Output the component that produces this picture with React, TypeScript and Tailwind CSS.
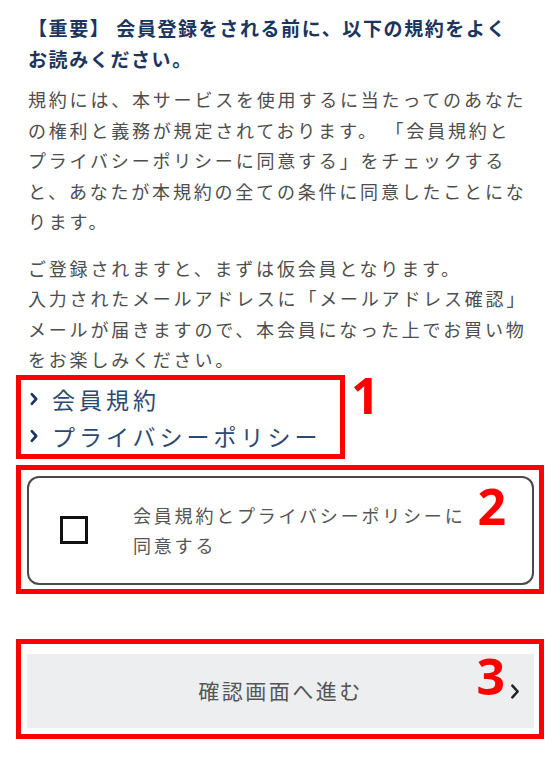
import React from 'react';

function Chevron({ className, width = 2.6 }: { className?: string; width?: number }) {
    return (
        <svg viewBox="0 0 10 16" className={className} fill="none" stroke="currentColor" strokeWidth={width} strokeLinecap="round" strokeLinejoin="round">
            <path d="M2.5 2.5 L7.5 8 L2.5 13.5" />
        </svg>
    );
}

function Mark({ n, className }: { n: string; className?: string }) {
    return (
        <span className={`font-['Open_Sans',sans-serif] text-[50px] font-bold tracking-normal text-[#ff0000] ${className ?? ''}`}>
            {n}
        </span>
    );
}

export default function App() {
    return (
        <div className="min-h-screen bg-white px-4 pt-[12px] font-['Noto_Sans_CJK_JP',sans-serif] [text-spacing-trim:space-all]">
            <div className="w-[524px] px-3">
                <h2 className="w-[488px] text-[19px] font-bold leading-[31px] tracking-[1.6px] text-[#1c355e]">
                    【重要】 会員登録をされる前に、以下の規約をよくお読みください。
                </h2>
                <p className="mt-[10px] text-[18px] leading-[30.5px] tracking-[2.8px] text-[#4d4d4d]">
                    規約には、本サービスを使用するに当たってのあなたの権利と義務が規定されております。 「会員規約とプライバシーポリシーに同意する」をチェックすると、あなたが本規約の全ての条件に同意したことになります。
                </p>
                <p className="mt-[16px] text-[18px] leading-[30.5px] tracking-[2.8px] text-[#4d4d4d]">
                    ご登録されますと、まずは仮会員となります。
                    <br />
                    入力されたメールアドレスに「メールアドレス確認」メールが届きますので、本会員になった上でお買い物をお楽しみください。
                </p>
            </div>

            <div className="flex items-start">
                <div className="w-[329px] border-[5px] border-[#ff0000] pt-[1px] pl-[8px]">
                    <a className="flex items-center text-[23px] leading-[37px] tracking-[4px] text-[#2c4a70]">
                        <Chevron width={3} className="mr-[13px] h-[14px] w-[10px] text-[#1c355e]" />
                        会員規約
                    </a>
                    <a className="flex items-center text-[23px] leading-[36px] tracking-[4px] text-[#2c4a70]">
                        <Chevron width={3} className="mr-[13px] h-[14px] w-[10px] text-[#1c355e]" />
                        プライバシーポリシー
                    </a>
                </div>
                <Mark n="1" className="ml-[6px] leading-[40px]" />
            </div>

            <div className="mt-[6px] border-[5px] border-[#ff0000] p-[6px] pr-[5px] pb-[4px]">
                <label className="relative flex h-[109px] items-center rounded-[12px] border-2 border-[#4a4a4a] bg-white">
                    <span className="ml-[31px] h-[28px] w-[28px] shrink-0 border-[3px] border-[#111]" />
                    <span className="ml-[45px] w-[345px] text-[18px] leading-[30px] tracking-[2.8px] text-[#555]">
                        会員規約とプライバシーポリシーに同意する
                    </span>
                    <Mark n="2" className="absolute right-[26px] top-[3px] leading-[50px]" />
                </label>
            </div>

            <div className="mt-[45px] border-[5px] border-[#ff0000] px-[6px] pb-[6px] pt-[10px] pr-[5px]">
                <button className="relative flex h-[74px] w-full items-center justify-center bg-[#eceef0] text-[21px] tracking-[2.5px] text-[#555]">
                    確認画面へ進む
                    <Chevron width={2.4} className="absolute right-[13px] top-[29px] h-[17px] w-[12px] text-[#222]" />
                    <Mark n="3" className="absolute right-[29px] top-[-3px] leading-[50px]" />
                </button>
            </div>
        </div>
    );
}
